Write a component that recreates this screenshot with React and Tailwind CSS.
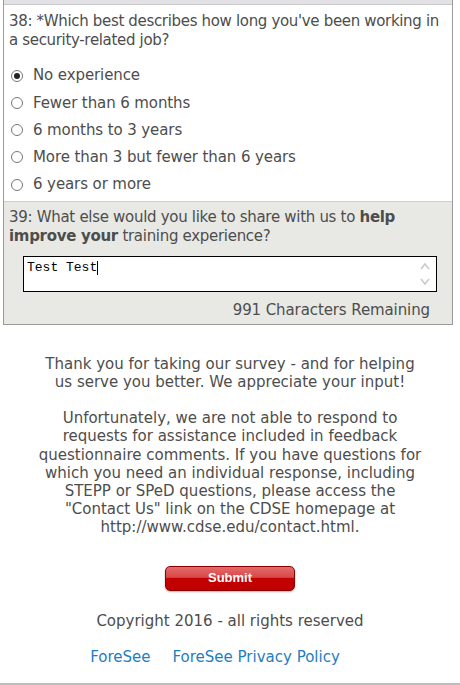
export default function App() {
  const font = { fontFamily: '"DejaVu Sans", Verdana, sans-serif' };
  const options = [
    ["No experience", true],
    ["Fewer than 6 months", false],
    ["6 months to 3 years", false],
    ["More than 3 but fewer than 6 years", false],
    ["6 years or more", false],
  ];
  return (
    <div className="w-[460px] h-[685px] bg-white overflow-hidden relative text-[#4d4d4d]" style={font}>
      <div className="mx-[3px] w-[450px] border-x border-b border-[#9a9a9a]">
        <div className="h-[5px] bg-[#e2e2e6] border-b border-[#c8c8c8]"></div>
        <div className="bg-white px-[5px] pt-[7px] pb-[3px]">
          <div className="text-[15px] leading-[19px] tracking-[-0.33px]">
            38: *Which best describes how long you've been working in a security-related job?
          </div>
          <div className="mt-[12px] flex flex-col">
            {options.map(([label, checked]) => (
              <label key={label} className="flex items-center h-[27.25px] text-[15px] tracking-[-0.1px]">
                <span className="w-[12px] h-[12px] rounded-full border border-[#777] bg-white flex items-center justify-center ml-[2px] mr-[10px]">
                  {checked && <span className="w-[6px] h-[6px] rounded-full bg-[#222]"></span>}
                </span>
                <span>{label}</span>
              </label>
            ))}
          </div>
        </div>
        <div className="bg-[#e8e9e4] border-t border-[#d0d0d0] px-[5px] pt-[6px] pb-[2px]">
          <div className="text-[15px] leading-[19px] tracking-[-0.3px]">
            39: What else would you like to share with us to <b>help improve your</b> training experience?
          </div>
          <div className="mt-[10px] ml-[14px] mr-[10px] h-[36px] border border-black bg-white relative">
            <div className="px-[3px] pt-[1px] text-[13px] text-black" style={{ fontFamily: '"Liberation Mono", monospace' }}>
              Test Test<span className="inline-block w-px h-[14px] bg-black align-middle"></span>
            </div>
            <svg className="absolute right-[5px] top-[3px]" width="12" height="28" viewBox="0 0 12 28">
              <path d="M2 9 L6 4 L10 9" stroke="#c8c8c8" strokeWidth="1.5" fill="none" />
              <path d="M2 19 L6 24 L10 19" stroke="#c8c8c8" strokeWidth="1.5" fill="none" />
            </svg>
          </div>
          <div className="text-right text-[15px] tracking-[-0.1px] mt-[7px] pr-[17px]">991 Characters Remaining</div>
        </div>
      </div>
      <div className="mt-[30px] flex flex-col items-center text-center text-[15px] leading-[18.2px]">
        <p className="w-[400px]">Thank you for taking our survey - and for helping<br />us serve you better. We appreciate your input!</p>
        <p className="w-[400px] mt-[18px]">
          Unfortunately, we are not able to respond to<br />requests for assistance included in feedback<br />questionnaire comments. If you have questions for<br />which you need an individual response, including<br />STEPP or SPeD questions, please access the<br />"Contact Us" link on the CDSE homepage at<br />http://www.cdse.edu/contact.html.
        </p>
        <button
          className="mt-[29px] w-[130px] h-[25px] rounded-[5px] border border-[#8a0000] text-white font-bold text-[13px] shadow-[0_1px_2px_rgba(0,0,0,0.3)] bg-[linear-gradient(#e46a6a_0%,#d84848_45%,#c40000_50%,#c00000_100%)]"
          style={{ fontFamily: '"Liberation Sans", Arial, sans-serif' }}
        >
          Submit
        </button>
        <div className="mt-[21px]">Copyright 2016 - all rights reserved</div>
        <div className="mt-[18px] flex gap-[22px] text-[#1d7ec4] -ml-[30px]">
          <span>ForeSee</span>
          <span>ForeSee Privacy Policy</span>
        </div>
      </div>
      <div className="absolute left-0 right-0 bottom-0 h-[2px] bg-[#bdbdbd]"></div>
    </div>
  );
}
